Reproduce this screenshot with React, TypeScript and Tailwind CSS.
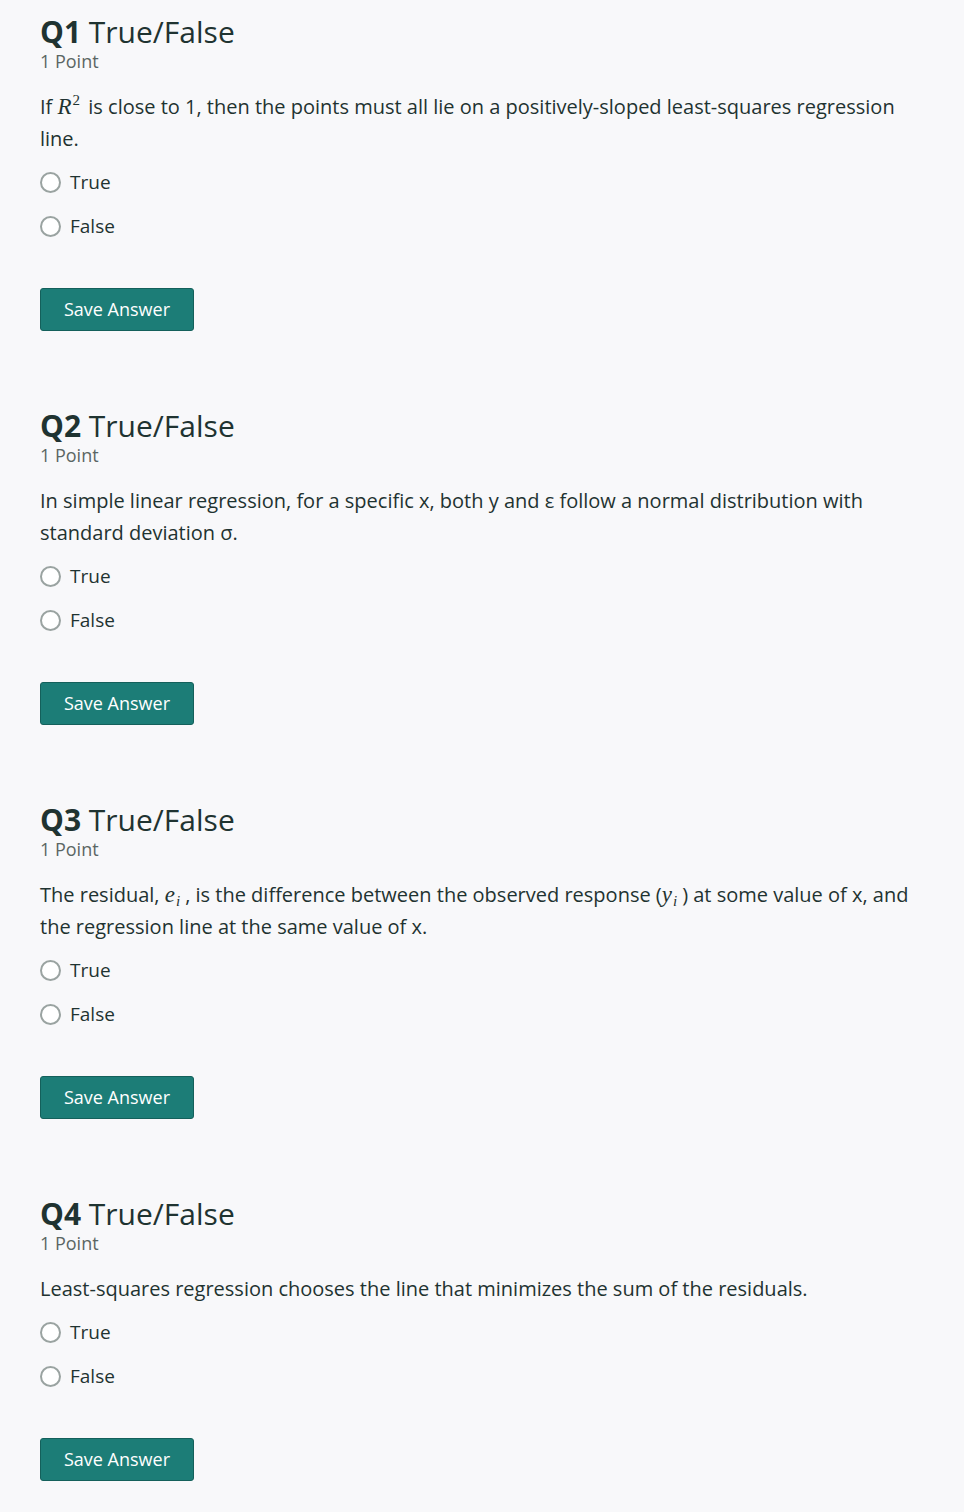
import React from "react";

const serif = { fontFamily: '"Liberation Serif", "DejaVu Serif", serif' };

function Radio({ label }: { label: string }) {
  return (
    <label className="flex items-center h-[44px] gap-[9px] cursor-pointer">
      <span className="w-[21px] h-[21px] rounded-full border-[2.5px] border-[#9aa3a1] bg-white box-border" />
      <span className="text-[19px] text-[#1f3331]">{label}</span>
    </label>
  );
}

function Question({ n, children }: { n: number; children: React.ReactNode }) {
  return (
    <section className="pt-[14px] pb-[63px]">
      <h2 className="text-[30px] leading-[36px] text-[#1f3331]">
        <span className="font-bold">Q{n}</span> True/False
      </h2>
      <div className="text-[18px] leading-[22px] text-[#5b6664]">1 Point</div>
      <p className="mt-[19px] text-[20px] leading-[32px] text-[#1f3331]">{children}</p>
      <div className="mt-[5px] flex flex-col">
        <Radio label="True" />
        <Radio label="False" />
      </div>
      <button className="mt-[40px] h-[43px] w-[154px] rounded-[3px] bg-[#1c7d77] border border-[#14605b] text-white text-[18px] font-medium">
        Save Answer
      </button>
    </section>
  );
}

function Sym({ v, sub, sup }: { v: string; sub?: string; sup?: string }) {
  return (
    <span style={serif} className="inline-block leading-none">
      <span className="italic text-[23px]">{v}</span>
      {sup && <span className="text-[15px] align-[9px] ml-[1px] mr-[3px]">{sup}</span>}
      {sub && <span className="italic text-[15px] align-[-4px] ml-[1px] mr-[5px]">{sub}</span>}
    </span>
  );
}

export default function App() {
  return (
    <div
      className="min-h-[1512px] bg-[#f8f8fa] px-[40px]"
      style={{ fontFamily: '"Open Sans", "Noto Sans", sans-serif' }}
    >
      <Question n={1}>
        If <Sym v="R" sup="2" /> is close to 1, then the points must all lie on a positively-sloped least-squares regression line.
      </Question>
      <Question n={2}>
        In simple linear regression, for a specific x, both y and ε follow a normal distribution with standard deviation σ.
      </Question>
      <Question n={3}>
        The residual, <Sym v="e" sub="i" />, is the difference between the observed response (<Sym v="y" sub="i" />) at some value of x, and the regression line at the same value of x.
      </Question>
      <Question n={4}>
        Least-squares regression chooses the line that minimizes the sum of the residuals.
      </Question>
    </div>
  );
}
